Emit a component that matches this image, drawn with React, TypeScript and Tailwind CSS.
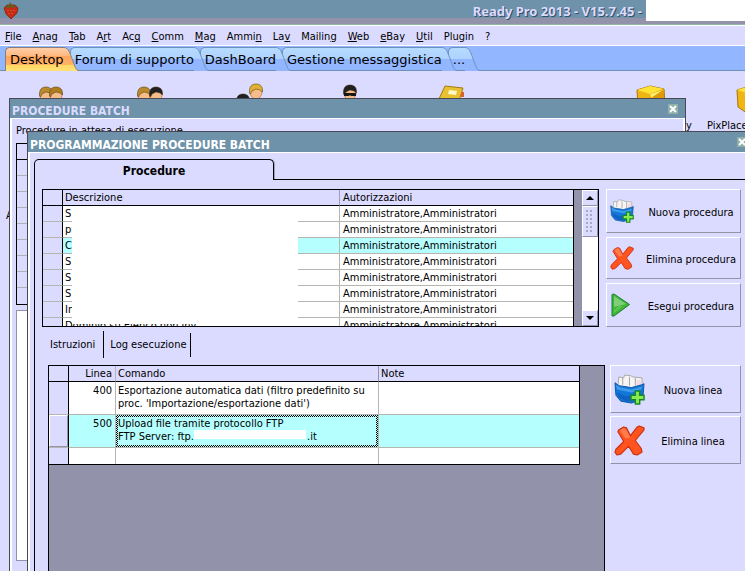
import { useId, type ReactNode } from "react";

const MENU: [string, string, string][] = [
  ["", "F", "ile"], ["", "A", "nag"], ["", "T", "ab"], ["A", "r", "t"], ["Ac", "q", ""],
  ["", "C", "omm"], ["", "M", "ag"], ["Ammi", "n", ""], ["La", "v", ""], ["Mailin", "g", ""],
  ["", "W", "eb"], ["", "e", "Bay"], ["", "U", "til"], ["Plu", "g", "in"], ["?", "", ""],
];

const PROCEDURES = ["S", "pi", "C", "S", "S", "S", "In", "Dominio su Elenco non inv"];

function DocTab({ label, selected, z }: { label: string; selected?: boolean; z: string }) {
  const id = useId();
  return (
    <button type="button" className={`relative -mr-[9px] flex h-6 ${z}`}>
      <span
        className={
          "h-6 rounded-tl-[5px] border-t border-l pl-1 leading-6 " +
          (selected
            ? "border-[#8a7f78] bg-[linear-gradient(#ffcfa8_0px,#ffb880_8px,#ffa45c_8px,#ffb468_17px,#ffd860_17px,#ffe07a_23px)]"
            : "border-[#6d92c0] border-b border-b-[#6d92b6] bg-[linear-gradient(#b6dbff_0px,#aed2ff_11px,#92b6ff_11px,#92b6ff_23px)]")
        }
      >
        {label}
      </span>
      <svg width="15" height="24" viewBox="0 0 15 24" aria-hidden="true">
        <defs>
          <linearGradient id={id} x1="0" y1="0" x2="0" y2="1">
            <stop offset="0" stopColor={selected ? "#ffcfa8" : "#b6dbff"} />
            <stop offset={selected ? ".37" : ".5"} stopColor={selected ? "#ffb880" : "#aed2ff"} />
            <stop offset={selected ? ".37" : ".5"} stopColor={selected ? "#ffa45c" : "#92b6ff"} />
            <stop offset={selected ? ".74" : "1"} stopColor={selected ? "#ffb468" : "#92b6ff"} />
            <stop offset={selected ? ".74" : "1"} stopColor={selected ? "#ffd860" : "#92b6ff"} />
            <stop offset="1" stopColor={selected ? "#ffe07a" : "#92b6ff"} />
          </linearGradient>
        </defs>
        <path d="M0 .5C5 .5 6 7 8.500 13S11.500 23.500 15 23.500V24H0z" fill={`url(#${id})`} />
        <path d="M0 .5C5 .5 6 7 8.500 13S11.500 23.500 15 23.500" fill="none" stroke={selected ? "#8a7f78" : "#6d92c0"} />
      </svg>
    </button>
  );
}

function CloseButton() {
  return (
    <button type="button" aria-label="Chiudi" className="flex size-[10px] items-center justify-center bg-[#8fb0a8]">
      <svg width="8" height="8" viewBox="0 0 8 8" aria-hidden="true">
        <path d="M1 1l6 6M7 1L1 7" stroke="#fff" strokeWidth="2" />
      </svg>
    </button>
  );
}

function BasketIcon({ size }: { size: number }) {
  return (
    <svg width={size} height={size} viewBox="0 0 32 32" aria-hidden="true">
      <path d="M4 13L5 3l5 1 1-3 7 1 1 1 10 1v12H5z" fill="#f6f4f4" stroke="#a8a8a2" />
      <path d="M9 11V4M16 12V3M22 12V4" fill="none" stroke="#a4a4a0" />
      <path d="M23 6h5v6h-5z" fill="#f4dbe6" />
      <path d="M1 9l4 3 13 2 11-3 2-1-1 12-3 5-9 3-11-2-5-6z" fill="#1277d8" stroke="#0d55a6" />
      <path d="M2 11l5 3 11 2 11-3-1 3-10 3-15-3z" fill="#3f9cec" />
      <path d="M3 19l9 4 8-1v6l-8 0-7-4z" fill="#0f62c0" />
      <path d="M23 17.500h4.500v4.500H32v4.500h-4.500V31H23v-4.500h-4.500V22H23z" fill="#8aea50" stroke="#16882a" strokeWidth="1.500" transform="translate(-1 0)" />
    </svg>
  );
}

function CrossIcon({ size }: { size: number }) {
  return (
    <svg width={size} height={size} viewBox="0 0 32 32" aria-hidden="true">
      <path
        d="M5 5l5-3 3 1 4 8 7-9 2-1 5 2v2l-9 11 6 8 1 4-5 3-4-1-5-8-8 8-4 1-2-3 1-3 8-8-6-10z"
        fill="#ff5420" stroke="#cc3010" strokeWidth="1.200" strokeLinejoin="round"
      />
      <path d="M6 5.500l4-2.500 2 1 5 9-5 1z" fill="#ff7c4c" />
    </svg>
  );
}

function PlayIcon() {
  return (
    <svg width="22" height="24" viewBox="0 0 22 24" aria-hidden="true">
      <path d="M2 1.500L4 1l15.500 10.500L4 23H2z" fill="#3fb53a" stroke="#1d7f2c" strokeLinejoin="round" />
      <path d="M4 3l12 8-12 3z" fill="#7fcf78" />
      <path d="M4 20l9-7H9l-5 4z" fill="#59c94d" />
    </svg>
  );
}

function SideButton({ icon, children, className }: { icon: ReactNode; children: ReactNode; className: string }) {
  return (
    <button
      type="button"
      className={`flex items-center border border-t-white border-l-white border-r-[#9292ab] border-b-[#9292ab] bg-[#dbdbff] text-left ${className}`}
    >
      <span className="flex w-8 shrink-0">{icon}</span>
      <span className="flex-1 pt-0.5 text-center">{children}</span>
    </button>
  );
}

function Person({ hair, glasses }: { hair: string; glasses?: boolean }) {
  return (
    <svg width="16" height="20" viewBox="0 0 16 20" aria-hidden="true">
      <ellipse cx="8" cy="9" rx="6" ry="7" fill="#f6bd8a" stroke="#a86a32" strokeWidth=".6" />
      <path d="M1.500 10C1 3 4 1 8 1s7 2 6.500 8L12 7 8 6 4 8 2.500 11z" fill={hair} stroke="#4a3410" strokeWidth=".5" />
      {glasses && <path d="M2 9h12v3h-5l-1-1-1 1H2z" fill="#161616" />}
    </svg>
  );
}

function Cube() {
  return (
    <svg width="30" height="34" viewBox="0 0 30 34" aria-hidden="true">
      <path d="M1 5L14 1l14 3 1 18-14 9L2 22z" fill="#f0b414" stroke="#a8780c" />
      <path d="M1 5L14 1l14 3-14 5z" fill="#ffe436" />
      <path d="M14 9l14-5v18l-14 8z" fill="#e09a08" />
      <path d="M14 9l13-4-12 8z" fill="#ffee70" />
    </svg>
  );
}

export default function App() {
  return (
    <div className="relative flex h-screen flex-col overflow-hidden bg-[#dbdbff] font-['DejaVu_Sans_Condensed','DejaVu_Sans',sans-serif] text-[11px] leading-[15px] text-black">
      <header className="flex h-[25px] shrink-0 border-b border-[#92b6a9] bg-[linear-gradient(#6d92a9_18px,#9292ab_18px)]">
        <svg className="mt-0.5 ml-[3px]" width="16" height="17" viewBox="0 0 16 17" aria-hidden="true">
          <path d="M1 6l3-3h8l3 3-1 5-6 6-5-5z" fill="#c62a14" stroke="#7c2010" strokeWidth=".7" />
          <path d="M2 4l4-1 1-3 2 3 5 1-4 2-2-1-3 2z" fill="#6a5a22" />
          <path d="M5 8v1M8 8v1M11 8v1M6 11v1M9 11v1" stroke="#e8783c" />
        </svg>
        <h1 className="ml-auto pt-[3px] pr-1 font-['Noto_Sans',sans-serif] text-[13px] leading-4 font-bold text-[#dbdbff] [text-shadow:1px_1px_0_#3a4f60]">
          Ready Pro 2013 - V15.7.45 -
        </h1>
        <div className="h-[21px] w-[99px] bg-white" />
      </header>

      <nav className="flex h-[21px] shrink-0 gap-[11px] border-y border-white pt-0.5 pl-[5px] leading-4">
        {MENU.map(([a, u, b]) => (
          <button key={a + u + b} type="button">
            {a}<u>{u}</u>{b}
          </button>
        ))}
      </nav>

      <div className="flex h-[25px] shrink-0 border-b border-[#6d92b6] bg-[#92b6ff] pt-px pl-[5px] font-['DejaVu_Sans',sans-serif] text-[13px]">
        <DocTab label="Desktop" selected z="z-50" />
        <DocTab label="Forum di supporto" z="z-40" />
        <DocTab label="DashBoard" z="z-30" />
        <DocTab label="Gestione messaggistica" z="z-20" />
        <DocTab label="..." z="z-10" />
      </div>

      <main className="relative flex-1 overflow-hidden">
        {/* desktop shortcuts */}
        <div className="absolute top-[15px] left-[38px] flex -space-x-1.5"><Person hair="#b98a2c" /><Person hair="#b07c20" /></div>
        <div className="absolute top-[15px] left-[136px] flex -space-x-1"><Person hair="#b98a2c" /><Person hair="#202020" /></div>
        <div className="absolute top-[22px] left-[235px]"><Person hair="#202020" /></div>
        <div className="absolute top-[12px] left-[248px]"><Person hair="#e0b030" /></div>
        <div className="absolute top-[13px] left-[342px]"><Person hair="#202020" glasses /></div>
        <svg className="absolute top-[14px] left-[437px]" width="30" height="16" viewBox="0 0 30 16" aria-hidden="true">
          <path d="M8 1l18 2-4 13H1z" fill="#e8c030" stroke="#a07c14" />
          <path d="M12 5l8 1-1 4-8-1z" fill="#fff8c8" />
          <path d="M24 7h3v5h-3z" fill="#e0602c" />
        </svg>
        <div className="absolute top-[14px] left-[636px]"><Cube /></div>
        <div className="absolute top-[14px] left-[736px]"><Cube /></div>
        <span className="absolute top-[47px] left-[686px]">y</span>
        <span className="absolute top-[47px] left-[707px]">PixPlace</span>
        <span className="absolute top-[137px] left-[6px]">A</span>

        {/* rear window */}
        <section className="absolute top-[27px] -bottom-1 left-[9px] flex w-[677px] flex-col border border-[#494955] bg-[#dbdbff]">
          <div className="flex h-[19px] shrink-0 items-center justify-between bg-[#6d92a9] pr-[7px] pl-[2px]">
            <h2 className="pt-1.5 text-[12px] font-bold text-[#dbdbff]">PROCEDURE BATCH</h2>
            <CloseButton />
          </div>
          <div className="flex-1 border-x-2 border-t border-white px-1 pt-1">
            <p>Procedure in attesa di esecuzione</p>
            <div className="mt-[5px] border border-black">
              <div className="h-4 border-b border-black" />
              {[0, 1, 2, 3, 4, 5, 6, 7, 8].map((n) => (
                <div key={n} className="h-4 border-b border-[#b0b0b8] last:border-0" />
              ))}
            </div>
            <div className="mt-[5px] h-[251px] border border-[#9292ab] bg-white" />
          </div>
        </section>

        {/* front window */}
        <section className="absolute top-[60px] -right-2.5 -bottom-1 left-[27px] flex flex-col border border-[#494955] bg-[#dbdbff]">
          <div className="flex h-5 shrink-0 items-center justify-between bg-[#6d92a9] pr-[7px] pl-[2px]">
            <h2 className="pt-1.5 text-[12px] font-bold text-white">PROGRAMMAZIONE PROCEDURE BATCH</h2>
            <CloseButton />
          </div>
          <div className="flex min-h-0 flex-1 flex-col border-t border-l-2 border-white pt-1.5 pl-1">
            <div className="flex h-[21px] shrink-0">
              <button
                type="button"
                className="w-[240px] rounded-t-[5px] border border-b-0 border-black pt-0.5 text-center text-[12px] font-bold shadow-[1px_0_0_#9e9eb8]"
              >
                Procedure
              </button>
              <div className="flex-1 border-b border-black" />
            </div>

            <div className="flex min-h-0 flex-1 flex-col border-l border-black pt-[9px] pr-[13px] pl-[7px]">
              <div className="flex shrink-0 gap-[7px]">
                <div className="relative flex h-[138px] flex-1 overflow-hidden border border-black bg-[#9292ab]">
                  <table className="h-max flex-1 table-fixed border-separate border-spacing-0 border-r border-black bg-white text-left">
                    <colgroup>
                      <col className="w-5" />
                      <col className="w-[277px]" />
                      <col />
                    </colgroup>
                    <thead className="bg-[#dbdbff]">
                      <tr className="h-4">
                        <th className="border-r border-b border-black p-0" />
                        <th className="border-r border-b border-r-[#9e9eb8] border-b-black p-0 pl-0.5 font-normal">Descrizione</th>
                        <th className="border-b border-black p-0 pl-[3px] font-normal">Autorizzazioni</th>
                      </tr>
                    </thead>
                    <tbody>
                      {PROCEDURES.map((p, i) => (
                        <tr key={i} className={i === 2 ? "h-4 bg-[#b6ffff]" : "h-4"}>
                          <th className="border-r border-b border-r-black border-b-[#b6b6b0] bg-[#dbdbff] p-0" />
                          <td className="border-r border-b border-[#b6b6b0] p-0 pl-0.5">{p}</td>
                          <td className="border-b border-[#b6b6b0] p-0 pl-[3px]">Amministratore,Amministratori</td>
                        </tr>
                      ))}
                    </tbody>
                  </table>
                  <div className="absolute top-4 left-[29px] h-[118px] w-[226px] bg-white" />
                  <div className="ml-2 flex w-4 flex-col bg-white">
                    <button type="button" aria-label="Su" className="flex h-4 items-center justify-center border border-t-white border-l-white border-r-[#9292ab] border-b-[#9292ab] bg-[#dbdbff]">
                      <svg width="8" height="4" viewBox="0 0 8 4" aria-hidden="true"><path d="M4 0l4 4H0z" /></svg>
                    </button>
                    <div className="flex h-[31px] items-center justify-center border border-t-white border-l-white border-r-[#9292ab] border-b-[#9292ab] bg-[#dbdbff]">
                      <div className="h-6 w-2 bg-[radial-gradient(circle_at_1px_1px,#a8a8c4_1px,transparent_1px)] bg-[length:4px_4px]" />
                    </div>
                    <button type="button" aria-label="Giù" className="mt-auto flex h-4 items-center justify-center border border-t-white border-l-white border-r-[#9292ab] border-b-[#9292ab] bg-[#dbdbff]">
                      <svg width="8" height="4" viewBox="0 0 8 4" aria-hidden="true"><path d="M0 0h8L4 4z" /></svg>
                    </button>
                  </div>
                </div>
                <div className="flex w-[135px] shrink-0 flex-col justify-between">
                  <SideButton className="h-11 pl-[3px]" icon={<BasketIcon size={24} />}>Nuova procedura</SideButton>
                  <SideButton className="h-[42px] pl-[3px]" icon={<CrossIcon size={24} />}>Elimina procedura</SideButton>
                  <SideButton className="h-11 pl-[3px]" icon={<PlayIcon />}>Esegui procedura</SideButton>
                </div>
              </div>

              <div className="mt-1 flex shrink-0 items-center">
                <button type="button" className="h-[27px] border-r border-black pr-2 pl-2">Istruzioni</button>
                <button type="button" className="h-6 border-r border-black pr-[3px] pl-1.5">Log esecuzione</button>
              </div>

              <div className="mt-[7px] flex min-h-0 flex-1 gap-[5px] pl-1.5">
                <div className="flex-1 border border-black bg-[#9292ab] pr-6">
                  <table className="w-full table-fixed border-separate border-spacing-0 border-r border-b border-black bg-white text-left align-top leading-[13px]">
                    <colgroup>
                      <col className="w-5" />
                      <col className="w-[47px]" />
                      <col className="w-[263px]" />
                      <col />
                    </colgroup>
                    <thead className="bg-[#dbdbff]">
                      <tr className="h-4">
                        <th className="border-r border-b border-black p-0" />
                        <th className="border-r border-b border-r-[#b6b6b0] border-b-black p-0 pr-[3px] text-right font-normal">Linea</th>
                        <th className="border-r border-b border-r-[#9292ab] border-b-black p-0 pl-0.5 font-normal">Comando</th>
                        <th className="border-b border-black p-0 pl-0.5 font-normal">Note</th>
                      </tr>
                    </thead>
                    <tbody>
                      <tr className="h-[33px] align-top">
                        <th className="border-r border-b border-r-black border-b-[#b6b6b0] bg-[#dbdbff] p-0" />
                        <td className="border-r border-b border-[#b6b6b0] p-0 pt-0.5 pr-[3px] text-right">400</td>
                        <td className="border-r border-b border-[#b6b6b0] p-0 pt-0.5 pl-0.5">
                          Esportazione automatica dati (filtro predefinito su<br />proc. 'Importazione/esportazione dati')
                        </td>
                        <td className="border-b border-[#b6b6b0] p-0" />
                      </tr>
                      <tr className="h-[33px] bg-[#b6ffff] align-top">
                        <th className="border-r border-b border-r-black border-b-[#b6b6b0] bg-[#dbdbff] p-0">
                          <div className="h-8 border border-t-white border-l-white border-r-[#9292ab] border-b-[#9292ab]" />
                        </th>
                        <td className="border-r border-b border-[#b6b6b0] p-0 pt-0.5 pr-[3px] text-right">500</td>
                        <td className="border-r border-b border-[#b6b6b0] bg-[conic-gradient(#000_25%,#b6ffff_0_50%,#000_0_75%,#b6ffff_0)] bg-[length:2px_2px] p-0.5">
                          <div className="h-7 bg-[#b6ffff]">
                            <div>Upload file tramite protocollo FTP</div>
                            <div className="flex">
                              FTP Server: ftp.<span className="mr-px h-[9px] w-28 bg-white" />.it
                            </div>
                          </div>
                        </td>
                        <td className="border-b border-[#b6b6b0] p-0" />
                      </tr>
                      <tr className="h-4">
                        <th className="border-r border-black bg-[#dbdbff] p-0" />
                        <td className="border-r border-[#b6b6b0] p-0" />
                        <td className="border-r border-[#b6b6b0] p-0" />
                        <td className="p-0" />
                      </tr>
                    </tbody>
                  </table>
                </div>
                <div className="flex w-[131px] shrink-0 flex-col gap-[3px]">
                  <SideButton className="h-12 pl-[3px]" icon={<BasketIcon size={31} />}>Nuova linea</SideButton>
                  <SideButton className="h-12 pl-[3px]" icon={<CrossIcon size={31} />}>Elimina linea</SideButton>
                </div>
              </div>
            </div>
          </div>
        </section>
      </main>
    </div>
  );
}
